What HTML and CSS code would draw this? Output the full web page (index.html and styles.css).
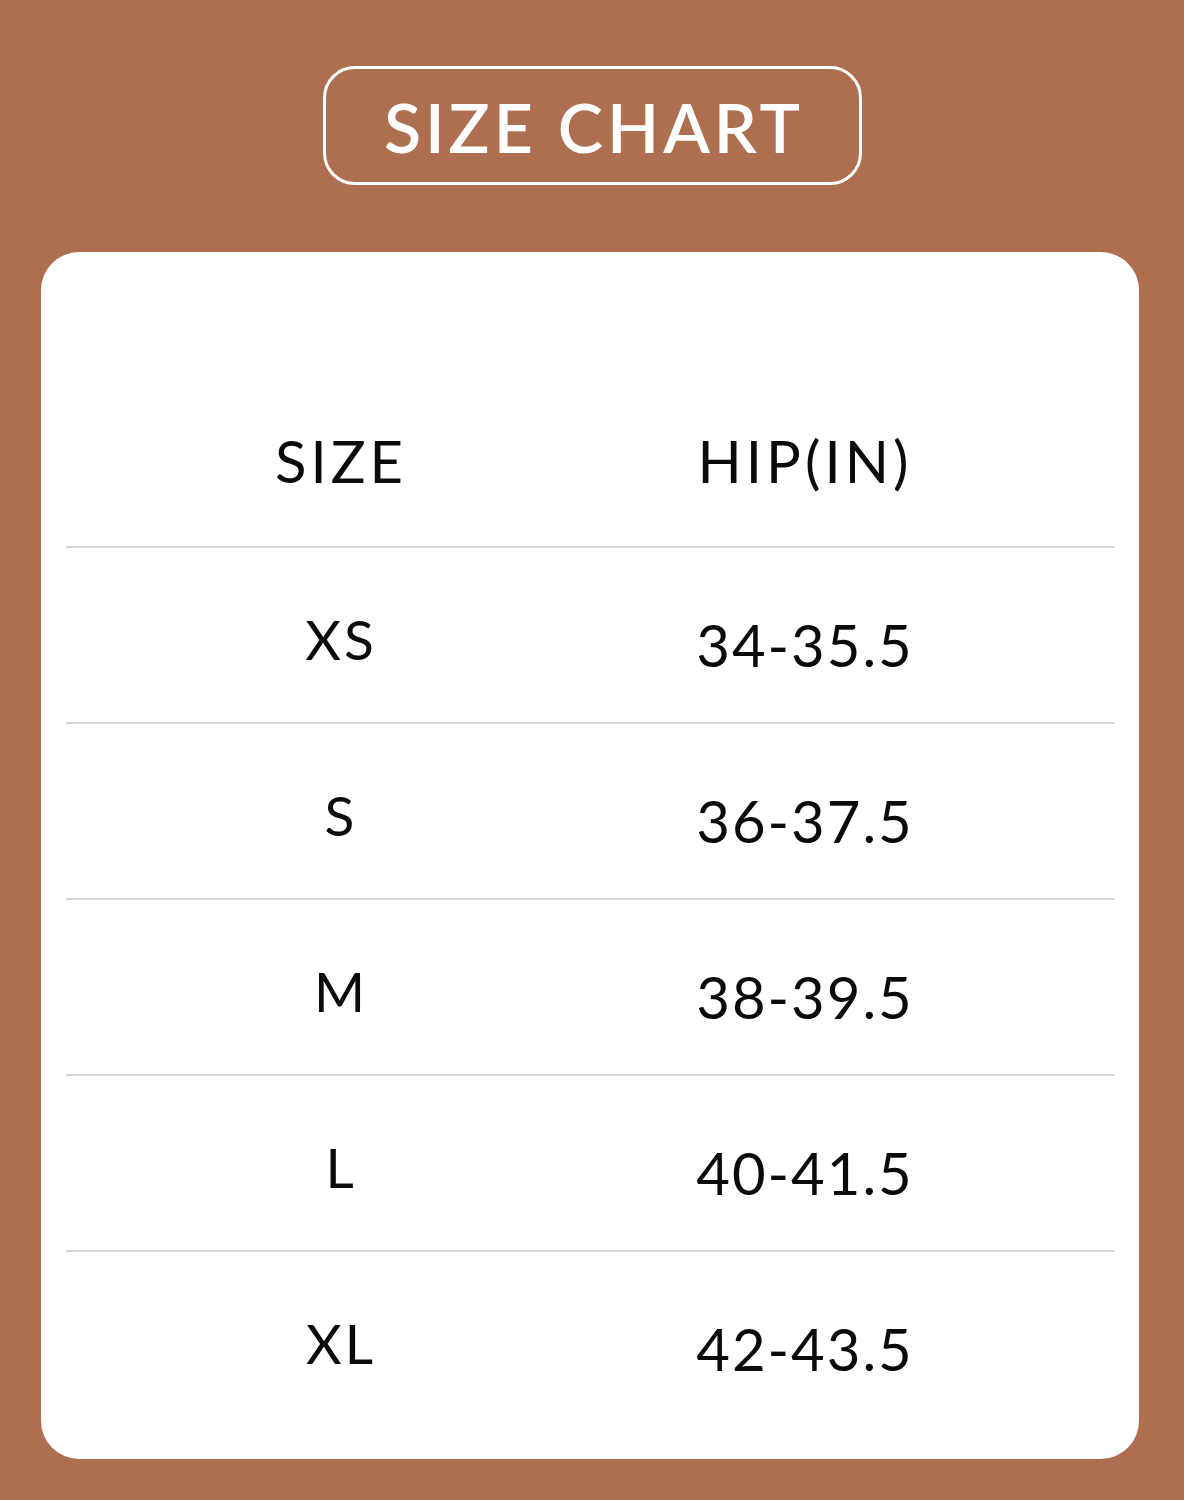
FILE: index.html
```html
<!DOCTYPE html>
<html>
<head>
<meta charset="utf-8">
<link rel="stylesheet" href="styles.css">
</head>
<body>
<div class="page">
  <div class="title-wrap">
    <div class="title">SIZE CHART</div>
  </div>
  <div class="card">
    <div class="table">
      <div class="row head"><div class="c1">SIZE</div><div class="c2">HIP(IN)</div></div>
      <div class="row"><div class="c1">XS</div><div class="c2 num">34-35.5</div></div>
      <div class="row"><div class="c1">S</div><div class="c2 num">36-37.5</div></div>
      <div class="row"><div class="c1">M</div><div class="c2 num">38-39.5</div></div>
      <div class="row"><div class="c1">L</div><div class="c2 num">40-41.5</div></div>
      <div class="row last"><div class="c1">XL</div><div class="c2 num">42-43.5</div></div>
    </div>
  </div>
</div>
</body>
</html>
```
FILE: styles.css
```css
html, body {
  margin: 0;
  padding: 0;
}
body {
  background: #ae6f51;
  font-family: "Lato", "Liberation Sans", sans-serif;
  width: 1184px;
  height: 1500px;
  overflow: hidden;
}
.page {
  padding-top: 66px;
}
.title-wrap {
  display: flex;
  justify-content: center;
}
.title {
  box-sizing: border-box;
  width: 539px;
  height: 119px;
  border: 3px solid #ffffff;
  border-radius: 32px;
  color: #ffffff;
  font-size: 68px;
  font-weight: 600;
  letter-spacing: 4px;
  display: flex;
  align-items: center;
  justify-content: center;
  padding-top: 2px;
  padding-left: 4px;
}
.card {
  margin: 67px 45px 0 41px;
  background: #ffffff;
  border-radius: 38px;
  padding: 120px 25px 33px 25px;
}
.row {
  display: grid;
  grid-template-columns: 550px 1fr;
  height: 174px;
  box-sizing: content-box;
  border-bottom: 2px solid #d4d4d4;
  align-items: center;
  color: #0a0a0a;
}
.row.last {
  border-bottom: none;
}
.c1, .c2 {
  text-align: center;
  padding-top: 8px;
  font-size: 55px;
  line-height: 1;
  letter-spacing: 3px;
}
.c2 {
  padding-right: 120px;
}
.c2.num {
  padding-top: 20px;
  font-size: 58px;
  letter-spacing: 2px;
}
.head .c1, .head .c2 {
  font-size: 58px;
  padding-top: 4px;
  letter-spacing: 4px;
}
```
